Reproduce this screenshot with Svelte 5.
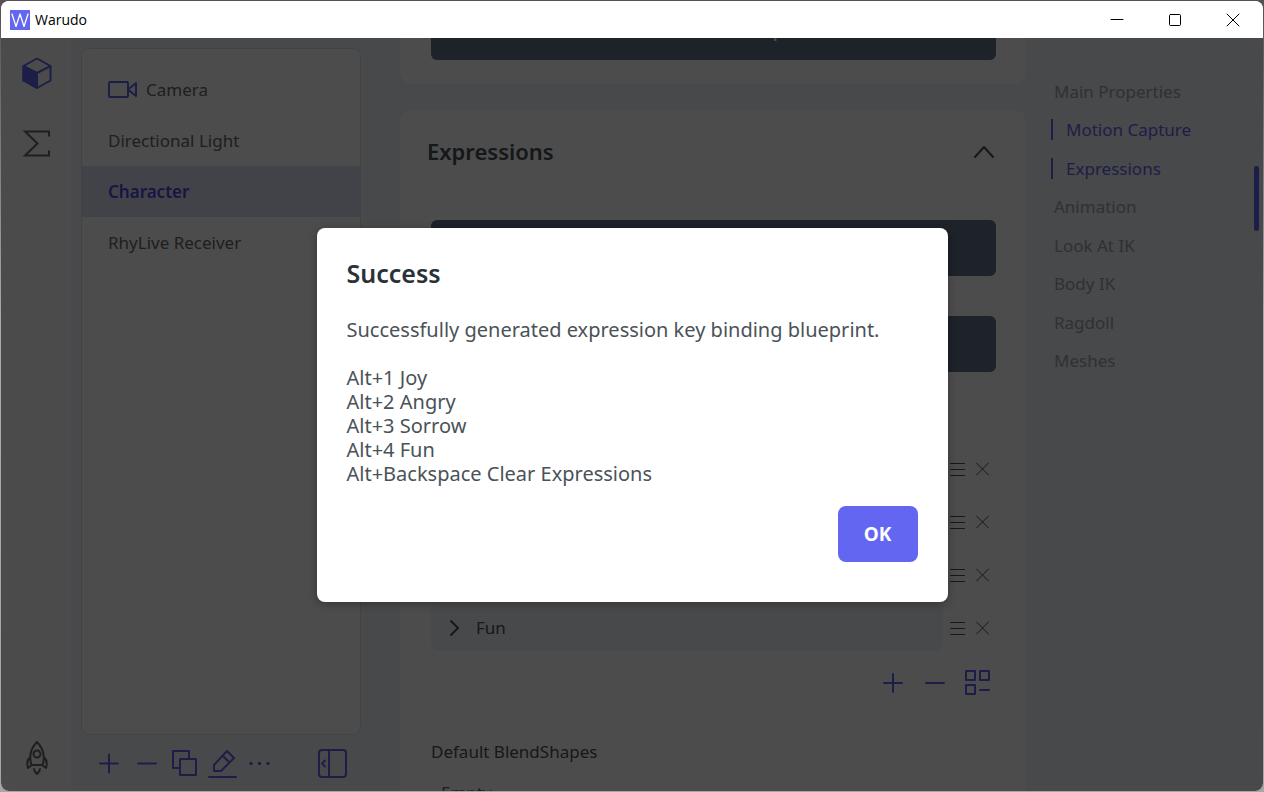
<script>
  const assets = [
    { name: 'Camera', camera: true },
    { name: 'Directional Light' },
    { name: 'Character', selected: true },
    { name: 'RhyLive Receiver' }
  ];
  const expressions = ['Joy', 'Angry', 'Sorrow', 'Fun'];
  const sections = [
    { name: 'Main Properties' },
    { name: 'Motion Capture', active: true },
    { name: 'Expressions', active: true },
    { name: 'Animation' },
    { name: 'Look At IK' },
    { name: 'Body IK' },
    { name: 'Ragdoll' },
    { name: 'Meshes' }
  ];
</script>

<div class="desktop">
  <div class="window">
    <header class="titlebar">
      <svg class="logo" viewBox="0 0 20 20" width="20" height="20" aria-hidden="true">
        <rect width="20" height="20" fill="#6366f1" stroke="none" />
        <path d="M2 4 6 16.500 10 4 14 16.500 18 4" fill="none" stroke="#fff" stroke-width="1.300" />
      </svg>
      <span class="app-name">Warudo</span>
      <div class="controls">
        <button aria-label="Minimize"><svg viewBox="0 0 14 14" width="14" height="14"><path d="M1 6.500h12" /></svg></button>
        <button aria-label="Maximize"><svg viewBox="0 0 14 14" width="14" height="14"><rect x="1.500" y="1.500" width="11" height="11" rx="1" /></svg></button>
        <button aria-label="Close"><svg viewBox="0 0 14 14" width="14" height="14"><path d="m1 1 12 12M13 1 1 13" /></svg></button>
      </div>
    </header>

    <div class="body">
      <nav class="rail" aria-label="Workspace">
        <button class="accent" aria-label="Assets">
          <svg viewBox="0 0 32 32" width="32" height="32">
            <path d="M16 1.500 29.500 9v14.500L16 31 2.500 23.500V9Z" />
            <path d="M2.500 9 16 16v15L2.500 23.500Z" fill="currentColor" />
            <path d="M16 16 29.500 9" />
          </svg>
        </button>
        <button aria-label="Blueprints">
          <svg viewBox="0 0 32 32" width="32" height="32"><path d="M28 9.500V4.500H4l12.500 12L4 28.500h24v-5" stroke-linejoin="miter" stroke-linecap="butt" /></svg>
        </button>
        <button class="rocket" aria-label="Launch">
          <svg viewBox="0 0 32 38" width="32" height="38">
            <path d="M10.500 26C8 18 9 10 16 3c7 7 8 15 5.500 23ZM9 18c-3 3-3.500 6-2 11l4-3M23 18c3 3 3.500 6 2 11l-4-3M13 30c0 2 1 3 3 5 2-2 3-3 3-5" />
            <circle cx="16" cy="15" r="3.500" />
          </svg>
        </button>
      </nav>

      <aside class="assets">
        <ul class="asset-list">
          {#each assets as asset}
            <li>
              <button class:selected={asset.selected}>
                {#if asset.camera}
                  <svg class="accent" viewBox="0 0 30 20" width="30" height="20"><rect x="1" y="2" width="19" height="15" rx="1" /><path d="m20 9.500 8-6.500v13Z" /></svg>
                {/if}
                {asset.name}
              </button>
            </li>
          {/each}
        </ul>
        <div class="asset-tools accent">
          <button aria-label="Add asset"><svg viewBox="0 0 30 30" width="30" height="30"><path d="M6 15.500h18M15 6.500v18" /></svg></button>
          <button aria-label="Remove asset"><svg viewBox="0 0 30 30" width="30" height="30"><path d="M6 15.500h18" /></svg></button>
          <button aria-label="Duplicate asset"><svg viewBox="0 0 30 30" width="30" height="30"><path d="M10 20H3V3h16v7" /><rect x="10" y="11" width="16" height="16" /></svg></button>
          <button aria-label="Rename asset"><svg viewBox="0 0 30 30" width="30" height="30"><path d="M1 29h27M6 23v-6L19 3l7 7-13 13ZM15 8l6 6" /></svg></button>
          <button aria-label="More"><svg viewBox="0 0 30 30" width="30" height="30"><g fill="currentColor" stroke="none"><circle cx="5" cy="15.500" r="1.700" /><circle cx="13.500" cy="15.500" r="1.700" /><circle cx="22" cy="15.500" r="1.700" /></g></svg></button>
          <button class="collapse" aria-label="Collapse list"><svg viewBox="0 0 30 30" width="30" height="30"><rect x="1" y="2" width="27" height="27" rx="3" /><path d="M11 2v27M7 12.500l-3 3 3 3" /></svg></button>
        </div>
      </aside>

      <main>
        <section class="card previous">
          <div class="fields">
            <button class="wide">Calibrate Motion Capture</button>
          </div>
        </section>
        <section class="card">
          <button class="heading">
            Expressions
            <svg viewBox="0 0 24 24" width="24" height="24"><path d="m3 18 9-10 9 10" /></svg>
          </button>
          <div class="fields">
            <button class="wide">Import VRM Expressions</button>
            <button class="wide">Generate Key Binding</button>
            <p class="label list-label">Expressions</p>
            <ul class="expressions">
              {#each expressions as name}
                <li>
                  <button class="expression">
                    <svg viewBox="0 0 20 20" width="20" height="20"><path d="m7 3 7 7-7 7" /></svg>{name}
                  </button>
                  <button class="small" aria-label="Reorder {name}"><svg viewBox="0 0 16 16" width="16" height="16"><path d="M1.500 2.500h14M1.500 8.500h14M1.500 14.500h14" /></svg></button>
                  <button class="small" aria-label="Delete {name}"><svg viewBox="0 0 16 16" width="16" height="16"><path d="m2.500 2 12 12M14.500 2l-12 12" /></svg></button>
                </li>
              {/each}
            </ul>
            <div class="list-tools accent">
              <button aria-label="Add expression"><svg viewBox="0 0 30 30" width="30" height="30"><path d="M6 15h18M15 6v18" /></svg></button>
              <button aria-label="Remove expression"><svg viewBox="0 0 30 30" width="30" height="30"><path d="M6 15h18" /></svg></button>
              <button aria-label="List options"><svg viewBox="0 0 30 30" width="30" height="30"><rect x="4" y="3" width="9" height="9" /><rect x="18" y="3" width="9" height="9" /><rect x="4" y="17" width="9" height="9" /><path d="M18 22h9" /></svg></button>
            </div>
            <p class="label">Default BlendShapes</p>
            <p class="empty">Empty</p>
          </div>
        </section>
      </main>

      <nav class="sections" aria-label="Sections">
        {#each sections as section}
          <a href="#section" class:active={section.active}>{section.name}</a>
        {/each}
      </nav>
      <div class="scrollbar"></div>

      <div class="overlay">
        <div class="dialog" role="dialog" aria-modal="true" aria-labelledby="dialog-title">
          <h2 id="dialog-title">Success</h2>
          <p>Successfully generated expression key binding blueprint.</p>
          <p>Alt+1 Joy<br />Alt+2 Angry<br />Alt+3 Sorrow<br />Alt+4 Fun<br />Alt+Backspace Clear Expressions</p>
          <button class="ok">OK</button>
        </div>
      </div>
    </div>
  </div>
</div>

<style>
  :global(body) { margin: 0; }
  .desktop {
    box-sizing: border-box;
    height: 100vh;
    padding: 1px;
    background: linear-gradient(#554f58, #a9a9ac 40%, #a9a5a5);
    font-family: "Noto Sans", sans-serif;
    font-size: 17px;
    color: #64696c;
  }
  .window {
    display: flex;
    flex-direction: column;
    height: 100%;
    border-radius: 8px;
    overflow: hidden;
    background: #f1f4f7;
  }
  button {
    display: flex;
    align-items: center;
    margin: 0;
    padding: 0;
    border: 0;
    background: none;
    font: inherit;
    color: inherit;
  }
  ul { list-style: none; margin: 0; padding: 0; }
  p { margin: 0; }
  svg { flex: none; fill: none; stroke: currentColor; stroke-width: 2; stroke-linejoin: round; stroke-linecap: round; }
  .accent { color: #6366f1; }

  .titlebar {
    display: flex;
    align-items: center;
    gap: 5px;
    flex: 0 0 37px;
    padding: 0 1px 0 9px;
    background: #fff;
    color: #000;
  }
  .app-name { font: 14px/20px "Open Sans", sans-serif; }
  .controls { display: flex; margin-left: auto; }
  .controls button { justify-content: center; width: 58px; height: 36px; }
  .controls svg { stroke-width: 1; }

  .body { position: relative; display: flex; flex: 1; min-height: 0; overflow: hidden; }
  .rail {
    display: flex;
    flex-direction: column;
    align-items: center;
    gap: 38px;
    flex: 0 0 70px;
    box-sizing: border-box;
    padding: 19px 0 14px 1px;
    background: #fafafa;
  }
  .rail .rocket { margin-top: auto; }

  .assets { display: flex; flex-direction: column; flex: 0 0 280px; margin-left: 10px; padding-top: 10px; }
  .asset-list { flex: 1; padding-top: 15px; border: 1px solid #dde1e6; border-radius: 8px; background: #fff; }
  .asset-list button { gap: 8px; width: 100%; height: 51px; padding: 0 26px; text-align: left; }
  .asset-list .selected { background: #dde2f0; color: #4f46e5; font-weight: 600; }
  .asset-tools { display: flex; align-items: center; gap: 8px; height: 56px; padding: 0 13px; }
  .asset-tools .collapse { margin-left: auto; }

  main { flex: 1; min-width: 0; margin-left: 39px; overflow: hidden; }
  .card { margin-bottom: 26px; padding: 0 27px; border-radius: 12px; background: #fff; }
  .fields { padding: 0 3px 0 4px; }
  .previous { margin-top: -34px; padding-bottom: 24px; }
  .wide {
    justify-content: center;
    box-sizing: border-box;
    width: 100%;
    height: 56px;
    padding-bottom: 4px;
    border-radius: 6px;
    background: #64748b;
    color: #fff;
    font-weight: 600;
  }
  .wide + .wide { margin-top: 40px; }
  .heading {
    justify-content: space-between;
    width: 100%;
    height: 82px;
    margin-bottom: 28px;
    padding-right: 3px;
    color: #475057;
    font-size: 22px;
    font-weight: 600;
  }
  .label { line-height: 24px; color: #4b5155; }
  .list-label { margin: 24px 0 25px; }
  .expressions { display: grid; gap: 6px; padding-right: 6px; }
  .expressions li { display: flex; align-items: center; }
  .expression { flex: 1; gap: 12px; height: 47px; padding: 0 13px; border-radius: 8px; background: #f1f4f7; color: #4b5155; }
  .small { margin-left: 6px; color: #4b5155; }
  .small + .small { margin-left: 9px; }
  .small svg { stroke-width: 1; }
  .list-tools { display: flex; justify-content: flex-end; gap: 12px; margin: 17px 4px 42px; }
  .empty { padding: 17px 10px 40px; }

  .sections {
    display: grid;
    grid-template-rows: repeat(8, 1fr);
    align-items: center;
    flex: 0 0 212px;
    box-sizing: border-box;
    height: 308px;
    margin: 34px 0 0 25px;
  }
  .sections a { padding-left: 3px; line-height: 21px; color: #a3a3a3; text-decoration: none; }
  .sections .active { padding-left: 13px; border-left: 2px solid #6366f1; color: #6366f1; }
  .scrollbar { position: absolute; top: 128px; right: 4px; width: 5px; height: 65px; border-radius: 3px; background: #6366f1; }

  .overlay { position: absolute; inset: 0; display: flex; justify-content: center; align-items: center; background: rgb(0 0 0 / 70%); }
  .dialog {
    display: flex;
    flex-direction: column;
    gap: 24px;
    box-sizing: border-box;
    width: 50%;
    padding: 30px 30px 40px;
    border-radius: 8px;
    background: #fff;
    color: #4a5258;
    font-size: 20px;
    line-height: 24px;
    box-shadow: 0 2px 8px rgb(0 0 0 / 30%);
  }
  h2 { margin: 0 0 6px; font-size: 25px; line-height: 30px; font-weight: 600; color: #2b3237; }
  .ok { align-self: flex-end; justify-content: center; width: 80px; height: 56px; margin-top: -4px; border-radius: 8px; background: #6366f1; color: #fff; font-weight: 700; font-size: 19px; }
</style>
